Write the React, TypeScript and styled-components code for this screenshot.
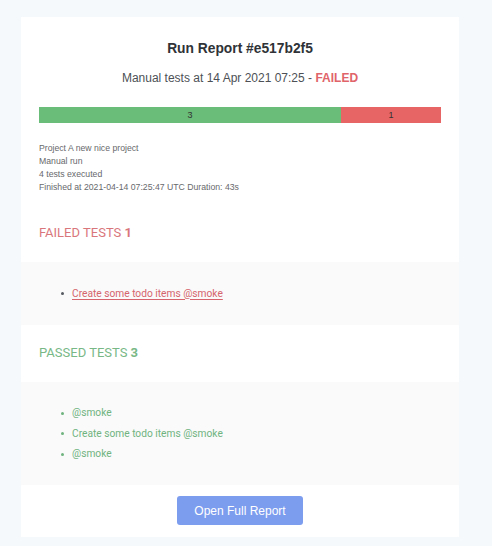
import React from "react";
import styled, { createGlobalStyle } from "styled-components";

const Global = createGlobalStyle`
  html, body { margin: 0; padding: 0; background: #f5f9fc; }
  body { font-family: "Liberation Sans", Arial, sans-serif; }
  * { box-sizing: border-box; }
`;

const Page = styled.div`
  padding: 17px 33px 8px 21px;
  min-height: 546px;
`;

const Card = styled.div`
  width: 438px;
  background: #ffffff;
  display: flex;
  flex-direction: column;
`;

const Header = styled.div`
  padding: 23px 18px 11px;
  display: flex;
  flex-direction: column;
`;

const Title = styled.h1`
  margin: 0;
  font-size: 13.8px;
  line-height: 18px;
  font-weight: 700;
  color: #2f3337;
  text-align: center;
`;

const Subtitle = styled.p`
  margin: 12px 0 0;
  font-size: 12px;
  line-height: 16px;
  color: #4d5156;
  text-align: center;
`;

const Status = styled.span`
  color: #e0646a;
  font-weight: 700;
`;

const Bar = styled.div`
  margin-top: 21px;
  display: flex;
  height: 16px;
`;

const Segment = styled.div<{ $color: string; $grow: number }>`
  flex: ${(p) => p.$grow} 0 0;
  background: ${(p) => p.$color};
  display: flex;
  align-items: center;
  justify-content: center;
  font-size: 9px;
  color: #333333;
`;

const Info = styled.div`
  margin-top: 19px;
  font-size: 8.7px;
  line-height: 13px;
  color: #67696c;
`;

const SectionHead = styled.h2<{ $color: string }>`
  margin: 0;
  padding: 20px 18px 21px;
  font-family: Roboto, "Liberation Sans", sans-serif;
  font-size: 13px;
  line-height: 16px;
  font-weight: 400;
  color: ${(p) => p.$color};
  background: #ffffff;

  b { font-weight: 700; }
`;

const List = styled.ul`
  margin: 0;
  padding: 21.5px 18px 20.5px 40px;
  list-style: none;
  background: #fafafa;
`;

const Item = styled.li<{ $color: string; $dot: string; $link?: boolean }>`
  display: flex;
  align-items: center;
  font-family: Roboto, "Liberation Sans", sans-serif;
  font-size: 10.2px;
  line-height: 20.5px;
  color: ${(p) => p.$color};
  text-decoration: ${(p) => (p.$link ? "underline" : "none")};
  text-underline-offset: 2px;

  &::before {
    content: "";
    width: 3px;
    height: 3px;
    border-radius: 50%;
    background: ${(p) => p.$dot};
    margin-right: 8px;
    flex: none;
  }
`;

const Footer = styled.div`
  padding: 11px 0 12px;
  display: flex;
  justify-content: center;
  background: #ffffff;
`;

const Button = styled.button`
  width: 126px;
  height: 29px;
  border: none;
  border-radius: 3px;
  background: #7c9cee;
  color: #ffffff;
  font-family: "Liberation Sans", Arial, sans-serif;
  font-size: 12px;
  padding: 0;
`;

export default function App() {
  return (
    <>
      <Global />
      <Page>
        <Card>
          <Header>
            <Title>Run Report #e517b2f5</Title>
            <Subtitle>
              Manual tests at 14 Apr 2021 07:25 - <Status>FAILED</Status>
            </Subtitle>
            <Bar>
              <Segment $color="#69bd78" $grow={302}>3</Segment>
              <Segment $color="#e76565" $grow={100}>1</Segment>
            </Bar>
            <Info>
              <div>Project A new nice project</div>
              <div>Manual run</div>
              <div>4 tests executed</div>
              <div>Finished at 2021-04-14 07:25:47 UTC Duration: 43s</div>
            </Info>
          </Header>
          <SectionHead $color="#d9767c">
            FAILED TESTS <b>1</b>
          </SectionHead>
          <List>
            <Item $color="#d5646c" $dot="#555a60" $link>
              Create some todo items @smoke
            </Item>
          </List>
          <SectionHead $color="#78b886">
            PASSED TESTS <b>3</b>
          </SectionHead>
          <List>
            <Item $color="#6fb37f" $dot="#6fb37f">@smoke</Item>
            <Item $color="#6fb37f" $dot="#6fb37f">Create some todo items @smoke</Item>
            <Item $color="#6fb37f" $dot="#6fb37f">@smoke</Item>
          </List>
          <Footer>
            <Button>Open Full Report</Button>
          </Footer>
        </Card>
      </Page>
    </>
  );
}
